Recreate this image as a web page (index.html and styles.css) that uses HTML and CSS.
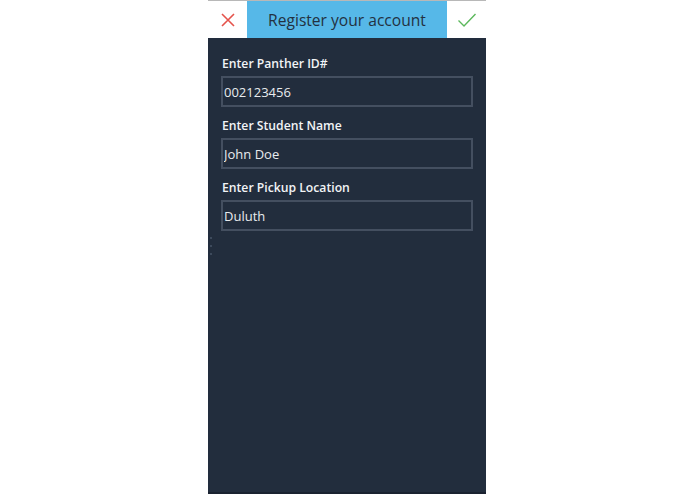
FILE: index.html
```html
<!DOCTYPE html>
<html lang="en">
<head>
  <meta charset="UTF-8">
  <meta name="viewport" content="width=device-width, initial-scale=1.0">
  <title>Register your account</title>
  <link rel="stylesheet" href="styles.css">
</head>
<body>
  <div class="phone">
    <div class="topbar">
      <button class="icon-btn cancel" aria-label="Cancel">
        <svg width="16" height="16" viewBox="0 0 16 16"><path d="M2 2 L14 14 M14 2 L2 14" stroke="#e5534b" stroke-width="1.6" fill="none"/></svg>
      </button>
      <div class="title">Register your account</div>
      <button class="icon-btn confirm" aria-label="Save">
        <svg width="20" height="16" viewBox="0 0 20 16"><path d="M1.5 8.5 L7 14 L18.5 2" stroke="#5cb85c" stroke-width="1.4" fill="none"/></svg>
      </button>
    </div>
    <div class="form">
      <span class="dots"><i></i><i></i><i></i></span>
      <label class="field">
        <span>Enter Panther ID#</span>
        <input type="text" value="002123456">
      </label>
      <label class="field">
        <span>Enter Student Name</span>
        <input type="text" value="John Doe">
      </label>
      <label class="field">
        <span>Enter Pickup Location</span>
        <input type="text" value="Duluth">
      </label>
    </div>
  </div>
</body>
</html>
```

FILE: styles.css
```css
body { margin: 0; background: #fff; font-family: "Open Sans", "Liberation Sans", sans-serif; }
.phone { width: 278px; height: 494px; margin: 0 auto 0 208px; display: flex; flex-direction: column; background: #222d3d; border-bottom: 2px solid #1a2230; box-sizing: border-box; }
.topbar { display: flex; height: 38px; background: #fff; border-top: 1px solid #b8b8b8; box-sizing: border-box; }
.icon-btn { width: 39px; border: none; background: #fff; padding: 0; display: flex; align-items: center; justify-content: center; cursor: pointer; }
.title { flex: 1; background: #56b8e8; color: #233141; font-size: 15.6px; display: flex; align-items: center; justify-content: center; padding-top: 1px; }
.form { position: relative; flex: 1; padding: 18px 13px 0 13px; }
.dots { position: absolute; left: 2px; top: 199px; display: flex; flex-direction: column; gap: 6px; }
.dots i { width: 2px; height: 2px; background: #3d4a5c; display: block; }
.field { display: block; margin-bottom: 11px; }
.field span { display: block; color: #f2f4f6; font-size: 12.2px; font-weight: 600; line-height: 16px; margin-bottom: 4px; margin-left: 1px; }
.field input { display: block; width: 252px; height: 31px; box-sizing: border-box; background: #222d3d; border: 2px solid #444f60; color: #e8ebee; font-family: inherit; font-size: 13px; padding: 0 0 0 1px; outline: none; }
```
